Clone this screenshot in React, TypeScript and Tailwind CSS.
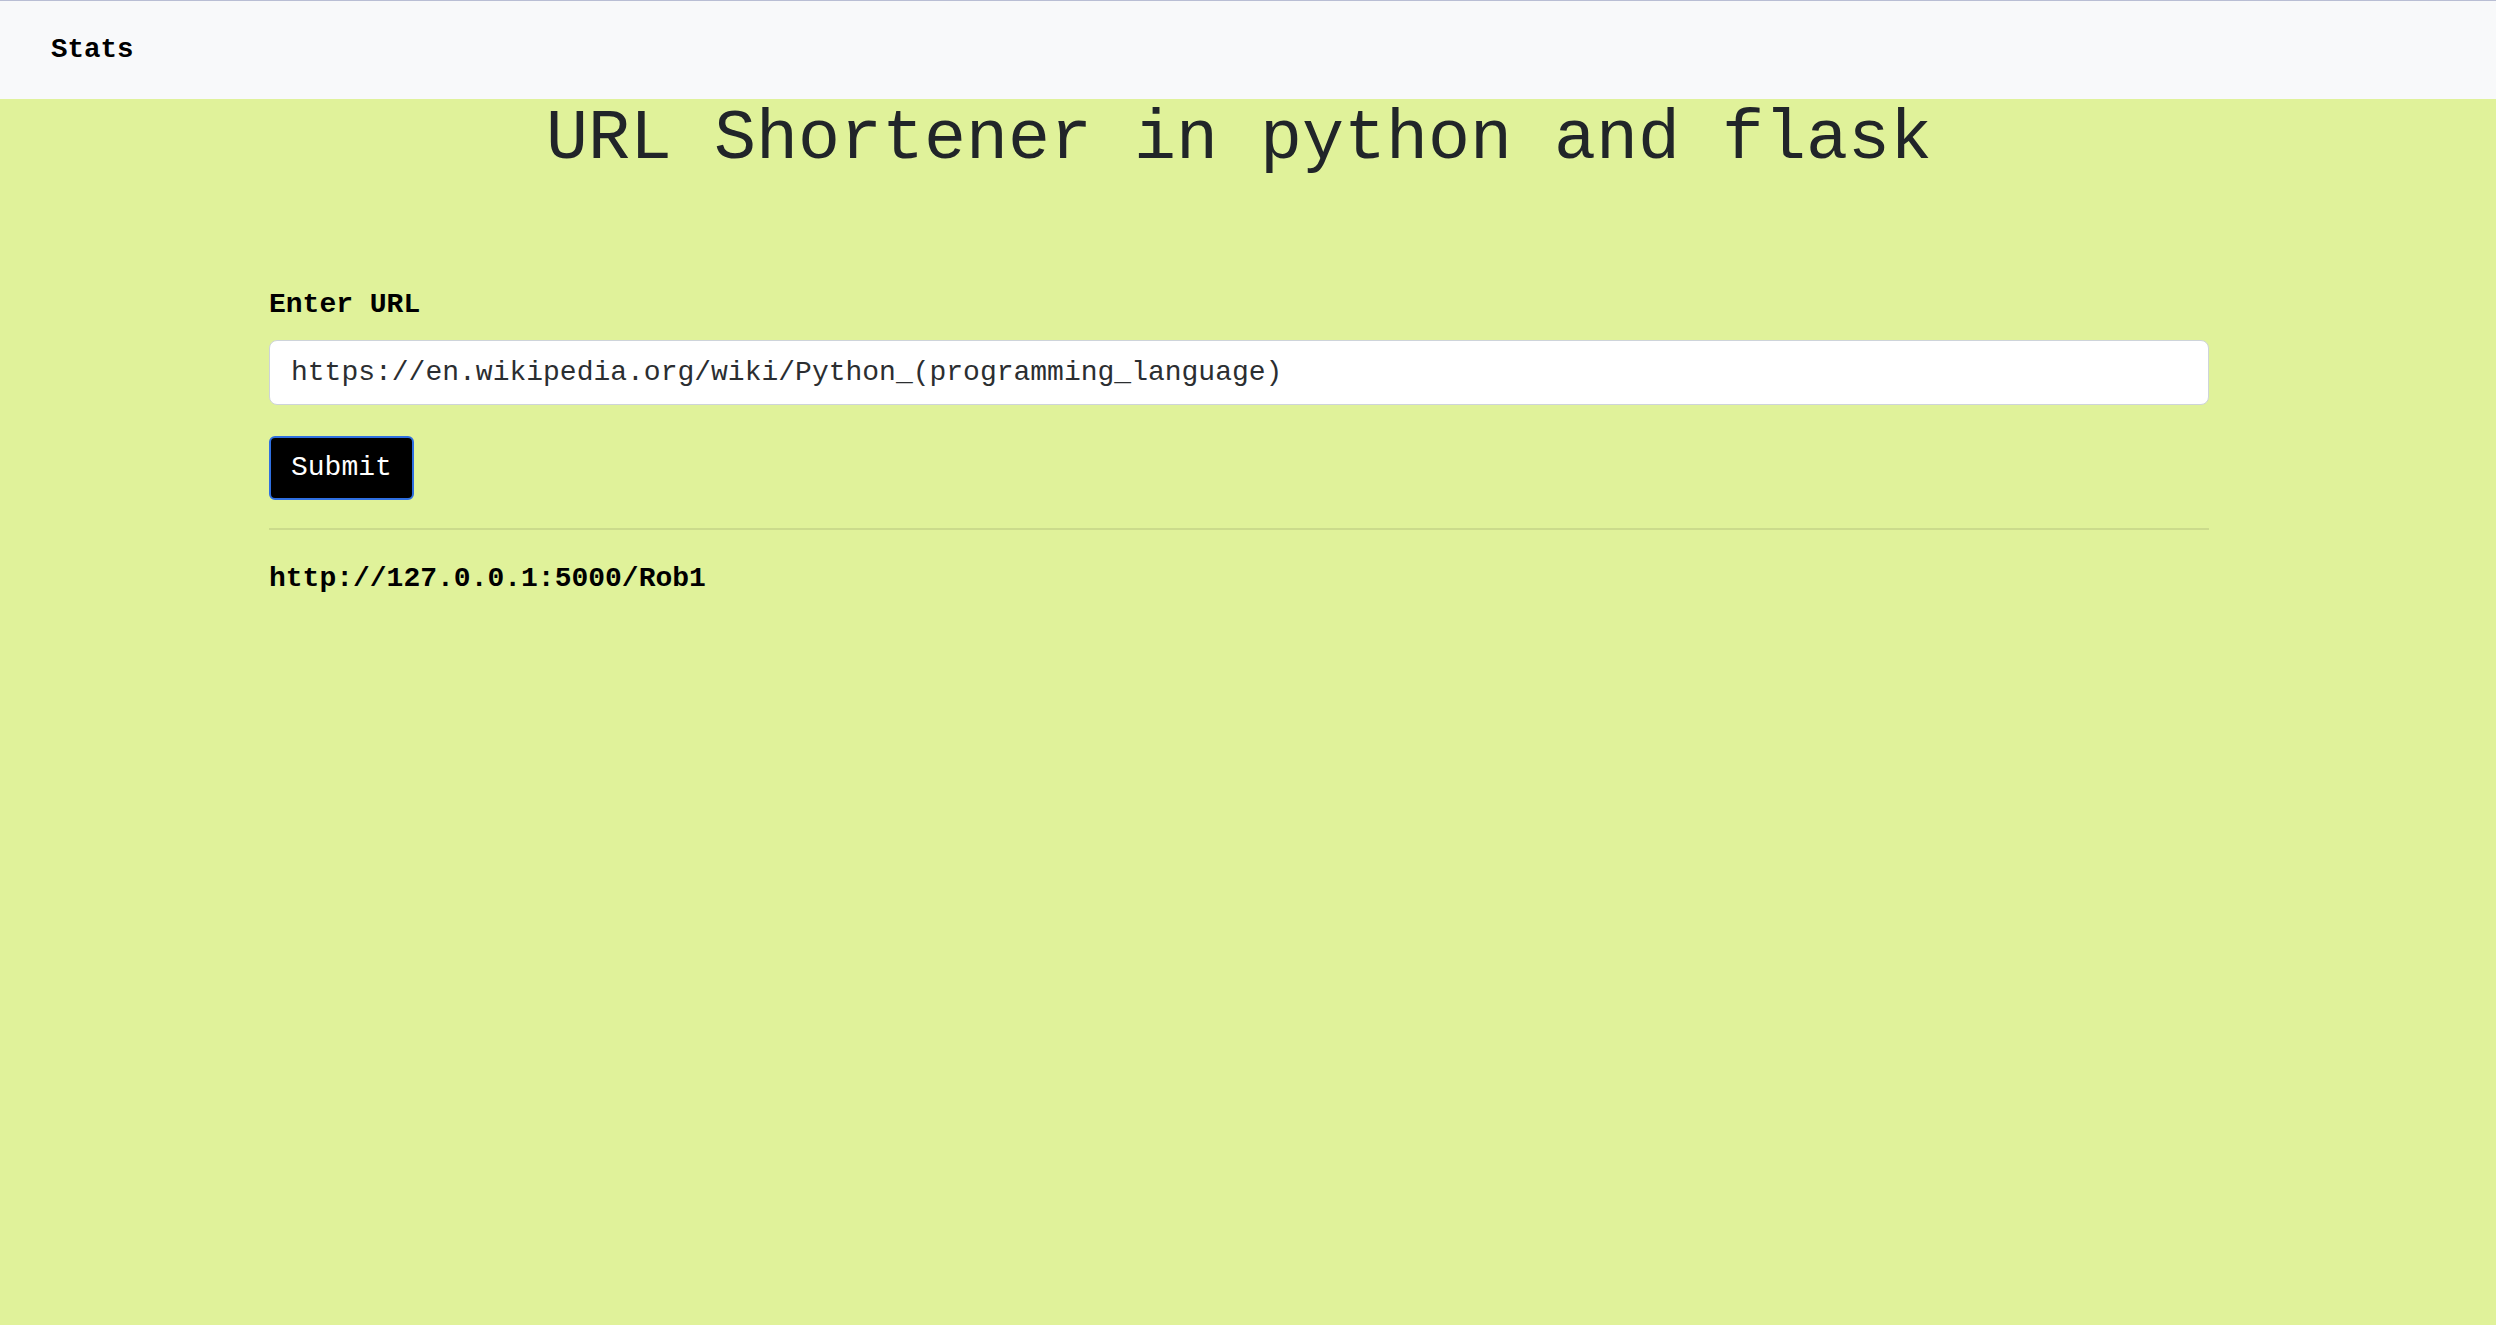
import React from "react";

const mono = "font-['Courier_New','Liberation_Mono',monospace]";

export default function App() {
  return (
    <div className={`min-h-[1325px] bg-[#e0f29a] text-[#212529] ${mono}`}>
      <nav className="h-[99px] border-t border-[#b9bed4] bg-[#f8f9fa] flex items-center pl-[51px]">
        <a className="text-[27.5px] font-bold text-black leading-none">Stats</a>
      </nav>
      <div className="w-[2478px]">
        <h1 className="text-center text-[70px] leading-[82px] font-normal">
          URL Shortener in python and flask
        </h1>
        <div className="mx-auto w-[1940px]">
          <form onSubmit={(e) => e.preventDefault()}>
            <label className="mt-[103px] block text-[28px] leading-[42px] font-bold text-black">
              Enter URL
            </label>
            <input
              className="mt-[14px] block h-[65px] w-full rounded-[8px] border border-[#ced4da] bg-white px-[21px] text-[28px] text-[#2b2e31] outline-none"
              defaultValue="https://en.wikipedia.org/wiki/Python_(programming_language)"
            />
            <button
              type="submit"
              className="mt-[31px] h-[64px] rounded-[6px] border-2 border-[#2f6fe0] bg-black px-[20px] text-[28px] text-white"
            >
              Submit
            </button>
          </form>
          <hr className="mt-[28px] border-t-2 border-[#cbdb8c]" />
          <p className="mt-[28px] text-[28px] leading-[42px] font-bold text-black">
            http://127.0.0.1:5000/Rob1
          </p>
        </div>
      </div>
    </div>
  );
}
